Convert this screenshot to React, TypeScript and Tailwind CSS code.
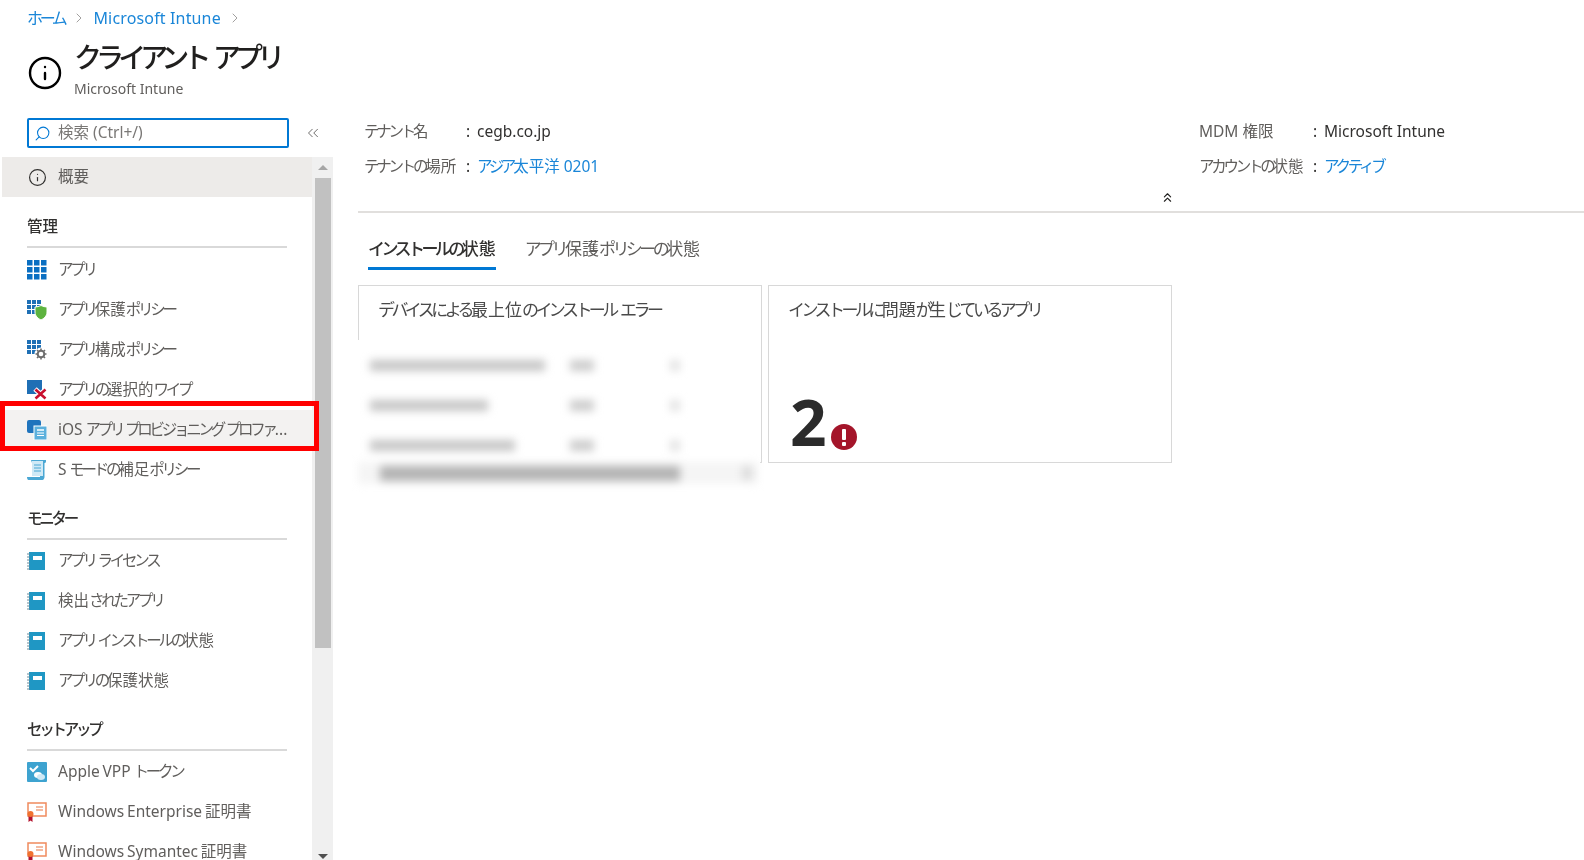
import { ChevronRight, ChevronsLeft, ChevronsUp, Search, Info } from 'lucide-react'
import type { ReactNode } from 'react'

// 元の画面のかな文字は幅が狭いので、かなだけ字間を詰める
function Jp({ text }: { text: string }) {
  const parts = text.split(/([ぁ-ゖァ-ヶー]+)/)
  return (
    <>
      {parts.map((p, i) =>
        i % 2 === 1 ? (
          <span key={i} className="tracking-[-0.21em]">
            {p}
          </span>
        ) : (
          <span key={i}>{p}</span>
        ),
      )}
    </>
  )
}

// サイドバーのアイコン
function GridIcon() {
  return (
    <svg width="20" height="20" viewBox="0 0 20 20">
      <g fill="#0a6fc2">
        {[0, 7, 14].map((x) =>
          [0, 7, 14].map((y) => <rect key={`${x}-${y}`} x={x} y={y} width="5.5" height="5.5" />),
        )}
      </g>
    </svg>
  )
}

function ShieldGridIcon() {
  return (
    <svg width="20" height="20" viewBox="0 0 20 20">
      <g fill="#1f70b5">
        {[0, 5, 10].map((x) =>
          [0, 5, 10].map((y) => <rect key={`${x}-${y}`} x={x} y={y} width="4" height="4" />),
        )}
      </g>
      <path d="M8 7c2 0 4-.6 6-1.500 2 .9 4 1.500 6 1.500v5c0 4-3 6.500-6 8-3-1.500-6-4-6-8z" fill="#5db33f" stroke="#fff" />
    </svg>
  )
}

function GearGridIcon() {
  return (
    <svg width="20" height="20" viewBox="0 0 20 20">
      <g fill="#1f70b5">
        {[0, 5, 10].map((x) =>
          [0, 5, 10].map((y) => <rect key={`${x}-${y}`} x={x} y={y} width="4" height="4" />),
        )}
      </g>
      <circle cx="14" cy="14" r="6.500" fill="#fff" />
      <circle cx="14" cy="14" r="3.300" fill="none" stroke="#6e6e6e" strokeWidth="2" />
      <path d="M14 8.500v2M14 17.500v2M8.500 14h2M17.500 14h2M10 10l1.500 1.500M16.500 16.500L18 18M18 10l-1.500 1.500M11.500 16.500L10 18" stroke="#6e6e6e" strokeWidth="1.600" />
    </svg>
  )
}

function WipeIcon() {
  return (
    <svg width="20" height="20" viewBox="0 0 20 20">
      <rect x="0" y="0" width="15" height="14" fill="#1f6fb5" />
      <path d="M8 9l11 10M19 9L8 19" stroke="#fff" strokeWidth="5" />
      <path d="M8.500 9.500l10 9M18.500 9.500l-10 9" stroke="#c8102e" strokeWidth="2.600" />
    </svg>
  )
}

function ProvisionIcon() {
  return (
    <svg width="20" height="20" viewBox="0 0 20 20">
      <rect x="0" y="0" width="14" height="13" rx="2" fill="#1f74bd" />
      <rect x="7" y="6" width="13" height="14" fill="#5cb0dc" stroke="#fff" />
      <path d="M10 13h7M10 15.500h7" stroke="#fff" />
      <path d="M10 9h7v2h-7z" fill="#d4ecf8" />
    </svg>
  )
}

function ScrollIcon() {
  return (
    <svg width="20" height="20" viewBox="0 0 20 20">
      <path d="M4 0h15v1.500c0 1-1 1.500-1.500 1.500V17c0 1.500-1 3-2 3H1.500C.5 20 0 18.500 0 17h13V3H5z" fill="#4aa7d4" />
      <rect x="5" y="1" width="11" height="15" fill="#cfe9f6" />
      <path d="M7 5h7M7 8h7M7 11h7" stroke="#4aa7d4" />
    </svg>
  )
}

function BookIcon() {
  return (
    <svg width="20" height="20" viewBox="0 0 20 20">
      <rect x="2" y="1" width="16" height="18" fill="#1f97c4" />
      <rect x="6" y="5" width="9" height="4" fill="#fff" />
      <path d="M0 3h3M0 6h3M0 9h3M0 12h3M0 15h3M0 18h3" stroke="#6b8a9a" />
    </svg>
  )
}

function VppIcon() {
  return (
    <svg width="20" height="20" viewBox="0 0 20 20">
      <rect x="0" y="0" width="20" height="20" rx="1" fill="#3ea3d0" />
      <path d="M3 6l3 3 5-5" fill="none" stroke="#fff" strokeWidth="2" />
      <ellipse cx="11" cy="13" rx="4" ry="3" fill="#fff" />
      <ellipse cx="14" cy="15" rx="4" ry="3" fill="#cfe9f6" />
    </svg>
  )
}

function CertIcon() {
  return (
    <svg width="20" height="20" viewBox="0 0 20 20">
      <rect x="1" y="1" width="18" height="13" fill="#fff" stroke="#f08a5d" strokeWidth="1.500" />
      <path d="M9 5h7M9 8h7" stroke="#f0a585" strokeWidth="1.500" />
      <path d="M1.500 14v6l2-1.500 2 1.500v-6z" fill="#b3122d" />
      <circle cx="3.500" cy="12" r="3" fill="#f0702f" />
    </svg>
  )
}

function NavRow({ icon, label, selected }: { icon: ReactNode; label: string; selected?: boolean }) {
  return (
    <div className={`flex h-10 shrink-0 items-center pl-[27px] text-[#605e5c] ${selected ? 'bg-[#f3f2f1]' : ''}`}>
      <span className="mr-[11px] flex w-5 shrink-0 justify-center">{icon}</span>
      <span className="whitespace-nowrap text-[15.500px] [word-spacing:-1.200px]">
        <Jp text={label} />
      </span>
    </div>
  )
}

function NavHeading({ label, className = '' }: { label: string; className?: string }) {
  return (
    <div className={`flex w-[260px] shrink-0 items-end border-b-2 border-[#d9d9d9] pb-[8px] text-[15.500px] font-medium text-[#323130] ${className}`}>
      <Jp text={label} />
    </div>
  )
}

function InfoRow({ label, labelWidth, value, link }: { label: string; labelWidth: string; value: string; link?: boolean }) {
  return (
    <div className="flex h-[35px] items-center text-[15.500px]">
      <span className={`whitespace-nowrap text-[#605e5c] ${labelWidth}`}>
        <Jp text={label} />
      </span>
      <span className="w-[11px] text-[#323130]">:</span>
      <span className={`whitespace-nowrap ${link ? 'text-[#1a86d8]' : 'text-[#323130]'}`}>
        <Jp text={value} />
      </span>
    </div>
  )
}

export default function App() {
  return (
    <div className="flex h-[860px] w-[1584px] flex-col overflow-hidden bg-white font-['Noto_Sans','Noto_Sans_CJK_JP',sans-serif] blur-[0.4px]">
      {/* ヘッダー */}
      <header className="h-[114px] shrink-0 pl-[27px]">
        <div className="flex h-9 items-center text-[16px] text-[#1a86d8]">
          <span>
            <Jp text="ホーム" />
          </span>
          <ChevronRight className="ml-[7px] mr-[6px] h-4 w-4 text-[#8a8886]" strokeWidth={1.200} />
          <span className="tracking-[0.15px]">Microsoft Intune</span>
          <ChevronRight className="ml-[6px] h-4 w-4 text-[#8a8886]" strokeWidth={1.200} />
        </div>
        <div className="flex items-center">
          <Info className="mr-[11px] mt-[10px] h-[36px] w-[36px] text-black" strokeWidth={1.600} />
          <div>
            <div className="text-[28px] font-medium leading-[42px] text-[#201f1e]">
              <Jp text="クライアント アプリ" />
            </div>
            <div className="mt-[1px] text-[14px] leading-5 text-[#605e5c]">Microsoft Intune</div>
          </div>
        </div>
      </header>

      <div className="flex min-h-0 flex-1">
        {/* サイドバー */}
        <aside className="flex w-[333px] shrink-0 flex-col pt-1">
          <div className="flex h-[39px] shrink-0 items-start pl-[27px]">
            <div className="flex h-[30px] w-[262px] items-center rounded-[2px] border-2 border-[#0078d4] pl-[5px] text-[#605e5c]">
              <Search className="mr-[7px] h-[17px] w-[17px] -scale-x-100 text-[#0078d4]" strokeWidth={1.500} />
              <span className="text-[15.500px] text-[#797775]">検索 (Ctrl+/)</span>
            </div>
            <ChevronsLeft className="ml-[15px] mt-[6px] h-[18px] w-[18px] text-[#605e5c]" strokeWidth={1.200} />
          </div>

          <div className="relative flex min-h-0 flex-1">
            <nav className="flex min-w-0 flex-1 flex-col overflow-hidden pl-[2px]">
              <div className="flex h-10 shrink-0 items-center bg-[#edebe9] pl-[25px] text-[#605e5c]">
                <span className="mr-[11px] flex w-5 justify-center">
                  <Info className="h-[19px] w-[19px] text-[#323130]" strokeWidth={1.500} />
                </span>
                <span className="text-[15.500px]">概要</span>
              </div>

              <NavHeading label="管理" className="ml-[25px] mt-[2px] mb-[2px] h-[49px]" />
              <div className="-ml-[2px] flex flex-col">
                <NavRow icon={<GridIcon />} label="アプリ" />
                <NavRow icon={<ShieldGridIcon />} label="アプリ保護ポリシー" />
                <NavRow icon={<GearGridIcon />} label="アプリ構成ポリシー" />
                <NavRow icon={<WipeIcon />} label="アプリの選択的ワイプ" />
                <NavRow icon={<ProvisionIcon />} label="iOS アプリ プロビジョニング プロファ..." selected />
                <NavRow icon={<ScrollIcon />} label="S モードの補足ポリシー" />
              </div>

              <NavHeading label="モニター" className="ml-[25px] mb-[1px] h-[50px]" />
              <div className="-ml-[2px] flex flex-col">
                <NavRow icon={<BookIcon />} label="アプリ ライセンス" />
                <NavRow icon={<BookIcon />} label="検出されたアプリ" />
                <NavRow icon={<BookIcon />} label="アプリ インストールの状態" />
                <NavRow icon={<BookIcon />} label="アプリの保護状態" />
              </div>

              <NavHeading label="セットアップ" className="ml-[25px] mb-[1px] h-[50px]" />
              <div className="-ml-[2px] flex flex-col">
                <NavRow icon={<VppIcon />} label="Apple VPP トークン" />
                <NavRow icon={<CertIcon />} label="Windows Enterprise 証明書" />
                <NavRow icon={<CertIcon />} label="Windows Symantec 証明書" />
              </div>
            </nav>

            {/* スクロールバー */}
            <div className="flex w-[21px] shrink-0 flex-col items-center bg-[#f0f0f0]">
              <div className="mt-[8px] h-0 w-0 border-x-[5px] border-b-[5px] border-x-transparent border-b-[#a6a6a6]" />
              <div className="mt-[8px] h-[470px] w-[16px] bg-[#c1c1c1]" />
              <div className="mt-auto mb-[1px] h-0 w-0 border-x-[5px] border-t-[5px] border-x-transparent border-t-[#505050]" />
            </div>

            {/* 赤枠の注釈 */}
            <div className="absolute left-0 top-[244px] h-[50px] w-[319px] border-[5px] border-[#ff0000]" />
          </div>
        </aside>

        {/* メイン */}
        <main className="min-w-0 flex-1 pl-[25px]">
          <div className="flex pl-[6px]">
            <div className="w-[835px]">
              <InfoRow label="テナント名" labelWidth="w-[102px]" value="cegb.co.jp" />
              <InfoRow label="テナントの場所" labelWidth="w-[102px]" value="アジア太平洋 0201" link />
            </div>
            <div>
              <InfoRow label="MDM 権限" labelWidth="w-[114px]" value="Microsoft Intune" />
              <InfoRow label="アカウントの状態" labelWidth="w-[114px]" value="アクティブ" link />
            </div>
          </div>
          <div className="flex h-[29px] items-center border-b-2 border-[#e1dfdd] pl-[802px]">
            <ChevronsUp className="h-[15px] w-[15px] text-[#201f1e]" strokeWidth={1.800} />
          </div>

          <div className="flex h-[57px] items-end pl-[10px] text-[17px]">
            <div className="mr-[29px] border-b-[3px] border-[#0078d4] pb-[6px] font-medium text-[#323130]">
              <Jp text="インストールの状態" />
            </div>
            <div className="pb-[9px] text-[#605e5c]">
              <Jp text="アプリ保護ポリシーの状態" />
            </div>
          </div>

          <div className="mt-[15px] flex gap-[6px]">
            <div className="relative h-[178px] w-[404px] border border-[#d8d8d8] px-[19px] pt-[11px] text-[17px] text-[#4a4a4a]">
              <Jp text="デバイスによる最上位のインストール エラー" />
              {/* ぼかしたテーブル */}
              <div className="absolute -left-[9px] top-[54px] h-[150px] w-[410px] bg-white">
                <div className="h-full pt-[20px] blur-[4px]">
                  {[
                    { w: 'w-[175px]', y: 'mb-[29px]' },
                    { w: 'w-[118px]', y: 'mb-[29px]' },
                    { w: 'w-[145px]', y: 'mb-[11px]' },
                  ].map((r, i) => (
                    <div key={i} className={`flex items-center pl-[20px] ${r.y}`}>
                      <div className={`${r.w} h-[11px] bg-[#c6c6c6]`} />
                      <div className="absolute left-[220px] h-[11px] w-[24px] bg-[#cccccc]" />
                      <div className="absolute left-[320px] h-[11px] w-[10px] bg-[#e2e2e2]" />
                    </div>
                  ))}
                  <div className="ml-[8px] h-[22px] w-[400px] bg-[#f5f5f5]" />
                  <div className="absolute left-[30px] top-[126px] h-[15px] w-[300px] bg-[#b4b4b4]" />
                  <div className="absolute left-[392px] top-[126px] h-[14px] w-[10px] bg-[#dcdcdc]" />
                </div>
              </div>
            </div>
            <div className="relative h-[178px] w-[404px] border border-[#d8d8d8] px-[19px] pt-[11px] text-[17px] text-[#4a4a4a]">
              <Jp text="インストールに問題が生じているアプリ" />
              <div className="absolute bottom-[8px] left-[21px] flex items-end">
                <span className="text-[64px] font-bold leading-[64px] text-[#2b2b2b]">2</span>
                <svg width="26" height="26" viewBox="0 0 26 26" className="mb-[4px] ml-[4px]">
                  <circle cx="13" cy="13" r="13" fill="#a4152a" />
                  <rect x="11" y="5" width="4" height="11" rx="1" fill="#fff" />
                  <rect x="11" y="18" width="4" height="4" rx="1" fill="#fff" />
                </svg>
              </div>
            </div>
          </div>
        </main>
      </div>
    </div>
  )
}
